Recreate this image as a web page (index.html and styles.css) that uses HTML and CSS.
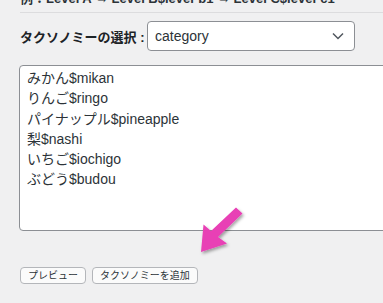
FILE: index.html
```html
<!DOCTYPE html>
<html lang="ja">
<head>
    <meta charset="UTF-8">
    <meta name="viewport" content="width=device-width, initial-scale=1.0">
    <title>タクソノミーの追加</title>
    <link rel="stylesheet" href="styles.css">
</head>
<body>
    <div class="wrap">
        <p class="example">例：Level A → Level B$level-b1 → Level C$level-c1</p>

        <div class="row">
            <label class="label">タクソノミーの選択 :</label>
            <div class="select">
                <span>category</span>
                <svg width="12" height="8" viewBox="0 0 12 8"><path d="M1 1.5 L6 6.5 L11 1.5" fill="none" stroke="#50575e" stroke-width="1.5"/></svg>
            </div>
        </div>

        <textarea class="terms">みかん$mikan
りんご$ringo
パイナップル$pineapple
梨$nashi
いちご$iochigo
ぶどう$budou</textarea>

        <div class="buttons">
            <button class="btn">プレビュー</button>
            <button class="btn">タクソノミーを追加</button>
        </div>
    </div>

    <!-- pointer arrow -->
    <svg class="arrow" width="383" height="303" viewBox="0 0 383 303">
        <defs>
            <filter id="shadow" x="-20%" y="-20%" width="150%" height="150%">
                <feDropShadow dx="1.5" dy="2" stdDeviation="1.5" flood-color="#000" flood-opacity="0.35"/>
            </filter>
        </defs>
        <polygon filter="url(#shadow)" fill="#e83fb5"
            points="236,207.5 242.5,213.5 218,237 227,243.5 201,252 203.5,224.5 211,231"/>
    </svg>
</body>
</html>
```
FILE: styles.css
```css
body {
    margin: 0;
    background: #f0f0f1;
    color: #1d2327;
    font-family: "Liberation Sans", "Noto Sans CJK JP", sans-serif;
    overflow: hidden;
    height: 303px;
}
.wrap {
    padding-left: 19px;
}
.example {
    margin: -10px 0 0 1px;
    font-size: 13px;
    line-height: 18px;
    font-weight: bold;
    color: #2c3338;
    white-space: nowrap;
    padding-bottom: 4px;
    border-bottom: 1px solid #dcdcde;
}
.row {
    display: flex;
    align-items: center;
    margin-top: 8px;
}
.label {
    font-size: 13px;
    font-weight: bold;
    margin-left: 1px;
    width: 127px;
    white-space: nowrap;
}
.select {
    width: 189px;
    height: 28px;
    padding: 0 10px 0 7px;
    display: flex;
    align-items: center;
    justify-content: space-between;
    background: #fff;
    border: 1px solid #8c8f94;
    border-radius: 4px;
    font-size: 14px;
    color: #2c3338;
}
.terms {
    display: block;
    box-sizing: border-box;
    margin-top: 14px;
    width: 400px;
    height: 166px;
    padding: 2px 7px;
    border: 1px solid #8c8f94;
    border-radius: 4px;
    background: #fff;
    resize: none;
    font-family: "Liberation Sans", "Noto Sans CJK JP", sans-serif;
    font-size: 14px;
    line-height: 20.3px;
    color: #2c3338;
}
.buttons {
    display: flex;
    gap: 6px;
    margin-top: 36px;
    margin-left: 1px;
}
.btn {
    height: 17px;
    padding: 0 7px;
    border: 1px solid #b4b6ba;
    border-radius: 4px;
    background: #fbfbfb;
    font-family: "Liberation Sans", "Noto Sans CJK JP", sans-serif;
    font-size: 10px;
    line-height: 15px;
    color: #2c3338;
}
.arrow {
    position: absolute;
    left: 0;
    top: 0;
    pointer-events: none;
}
```
